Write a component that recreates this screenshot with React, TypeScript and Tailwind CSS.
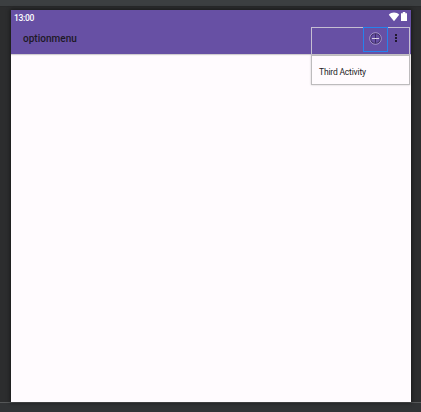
function StatusIcons() {
  return (
    <svg width="20" height="10" viewBox="0 0 20 10" fill="white">
      <path d="M.8 2.7C3.2-.2 8.8-.2 11.2 2.7L6 9.2Z" />
      <path d="M13 1.2h1.8V0h2.5v1.2H19V9H13Z" />
    </svg>
  );
}

function AddIcon() {
  return (
    <svg width="13" height="13" viewBox="0 0 13 13" fill="none">
      <circle cx="6.5" cy="6.5" r="5" stroke="#33235a" strokeWidth="1" />
      <circle cx="6.5" cy="6.5" r="5.8" stroke="#b7abd4" strokeWidth=".8" />
      <path d="M6.5 2v9" stroke="#3d2c66" strokeWidth="1" />
      <path d="M3 6.5h7" stroke="#d8d0e2" strokeWidth="1" />
    </svg>
  );
}

export default function App() {
  return (
    <div className="flex h-[412px] w-[421px] flex-col overflow-hidden bg-[#2c2d2e] font-[Roboto,sans-serif]">
      <div className="h-[7px] shrink-0 border-b border-[#292a2b] bg-[#3c3f41]" />
      <div className="h-[395px] shrink-0 pt-[3px] pl-[11px]">
        <main className="relative h-[392px] w-[400px] bg-[#fffbfe] shadow-[0_0_4px_1px_rgba(0,0,0,0.45)]">
          <header className="h-11 bg-[#6750a4] shadow-[0_1px_1px_rgba(0,0,0,0.18)]">
            <div className="flex h-[17px] items-start justify-between pr-[3px] pl-[3px]">
              <span className="pt-[3px] text-[8.5px] leading-[10px] font-medium tracking-[-0.3px] text-white">13:00</span>
              <span className="pt-0.5"><StatusIcons /></span>
            </div>
            <div className="flex h-[27px] items-start justify-between pr-px pl-3">
              <h1 className="pt-[5px] text-[10px] leading-[14px] font-medium tracking-[0.03px] text-[#1d1926]">optionmenu</h1>
              <div className="flex h-[28px] w-[99px] items-start border-x border-t border-[#c5bed2] pl-[51px]">
                <button className="-mt-px flex h-[25px] w-[25px] shrink-0 items-start justify-center border border-[#2583ed] pt-[4px] pr-px">
                  <AddIcon />
                </button>
                <div className="ml-[7px] flex flex-col gap-px pt-[6px]">
                  <i className="size-[2px] bg-[#21182f]" />
                  <i className="size-[2px] bg-[#21182f]" />
                  <i className="size-[2px] bg-[#21182f]" />
                </div>
              </div>
            </div>
          </header>
          <div className="absolute top-[45px] left-[300px] h-[30px] w-[99px] border border-[#bdbbbd] bg-[#fffbfe] shadow-[0_0_2px_rgba(0,0,0,0.2)]">
            <div className="pt-[11px] pl-[7px] text-[8.5px] leading-[10px] tracking-[-0.18px] text-[#1c1b1f]">Third Activity</div>
          </div>
        </main>
      </div>
      <footer className="h-[10px] shrink-0 border-t border-[#555758] bg-[#313335]" />
    </div>
  );
}
